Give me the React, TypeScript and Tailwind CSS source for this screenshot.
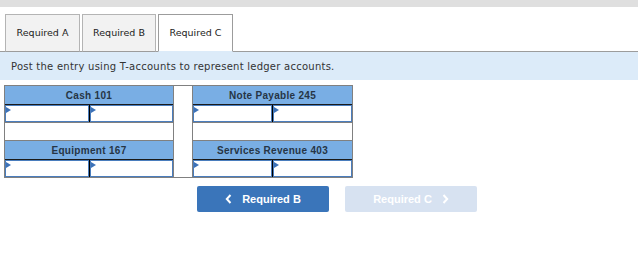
import React from "react";

function InputCell() {
  return (
    <div className="relative flex-1 h-full bg-white border border-[#4a7dbd]">
      <div className="absolute top-[1px] left-0 w-0 h-0 border-y-[3px] border-y-transparent border-l-[5px] border-l-[#3d72b8]" />
    </div>
  );
}

function InputRow() {
  return (
    <div className="flex h-[17px]">
      <InputCell />
      <div className="w-[1px] bg-black" />
      <InputCell />
    </div>
  );
}

function Header({ title }: { title: string }) {
  return (
    <div className="h-[19px] bg-[#79aee4] border-b border-[#1a1a1a] flex items-center justify-center text-[10px] font-bold text-[#263545] tracking-[0.3px]" style={{ fontFamily: '"Liberation Sans", Arial, sans-serif' }}>
      {title}
    </div>
  );
}

function Column({ top, bottom, width }: { top: string; bottom: string; width: string }) {
  return (
    <div className={`${width} border border-[#808080] flex flex-col`}>
      <Header title={top} />
      <InputRow />
      <div className="h-[19px] border-y border-[#808080] bg-white" />
      <Header title={bottom} />
      <InputRow />
    </div>
  );
}

export default function App() {
  const verdana = { fontFamily: '"DejaVu Sans", Verdana, sans-serif' };
  return (
    <div className="w-[638px] h-[269px] bg-white overflow-hidden">
      <div className="h-[7px] bg-[#dfdfdf]" />
      <div className="mt-[7px] flex items-end pl-[5px] gap-[2px] border-b border-[#9c9c9c]" style={verdana}>
        <div className="w-[75px] h-[38px] -mb-px bg-[#f2f2f2] border border-[#b4b4b4] border-b-[#9c9c9c] flex items-center justify-center text-[9.5px] text-[#222]">
          Required A
        </div>
        <div className="w-[74px] h-[38px] -mb-px bg-[#f2f2f2] border border-[#b4b4b4] border-b-[#9c9c9c] flex items-center justify-center text-[9.5px] text-[#222]">
          Required B
        </div>
        <div className="w-[75px] h-[38px] -mb-px bg-white border border-[#9c9c9c] border-b-[#dcebf9] flex items-center justify-center text-[9.5px] text-[#222]">
          Required C
        </div>
      </div>
      <div className="h-[28px] bg-[#dcebf9] flex items-center pl-[11px] text-[10px] tracking-[0.25px] text-[#333]" style={verdana}>
        Post the entry using T-accounts to represent ledger accounts.
      </div>
      <div className="mt-[5px] ml-[4px] flex">
        <Column top="Cash 101" bottom="Equipment 167" width="w-[170px]" />
        <div className="w-[18px] border-y border-[#808080] bg-white" />
        <Column top="Note Payable 245" bottom="Services Revenue 403" width="w-[161px]" />
      </div>
      <div className="mt-[8px] ml-[197px] flex gap-[16px]" style={{ fontFamily: '"Liberation Sans", Arial, sans-serif' }}>
        <div className="w-[132px] h-[26px] rounded-[2px] bg-[#3a75ba] flex items-center justify-center gap-[10px] text-white text-[11px] font-bold">
          <svg width="7" height="10" viewBox="0 0 7 10" fill="none">
            <path d="M5.5 1 L1.8 5 L5.5 9" stroke="white" strokeWidth="2" />
          </svg>
          <span>Required B</span>
        </div>
        <div className="w-[132px] h-[26px] rounded-[2px] bg-[#d7e2f1] flex items-center justify-center gap-[10px] text-white text-[11px] font-bold">
          <span>Required C</span>
          <svg width="7" height="10" viewBox="0 0 7 10" fill="none">
            <path d="M1.5 1 L5.2 5 L1.5 9" stroke="white" strokeWidth="2" />
          </svg>
        </div>
      </div>
    </div>
  );
}
